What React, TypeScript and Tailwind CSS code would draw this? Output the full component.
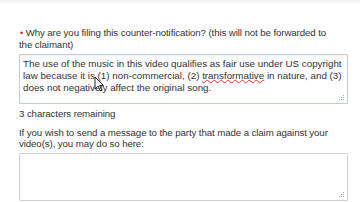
import React from "react";

export default function App() {
  return (
    <div className="w-[360px] h-[202px] overflow-hidden bg-white relative" style={{ fontFamily: '"Liberation Sans", Arial, sans-serif' }}>
      <div className="h-[4px] bg-gradient-to-b from-[#f0f0f0] to-white" />
      <div className="pl-[19px] pr-[12px] pt-[23px] text-[9.7px] tracking-[-0.1px] leading-[11px] text-[#333]">
        <div className="pl-[1px] whitespace-nowrap">
          <span className="text-[#d22] text-[9px]">•</span> Why are you filing this counter-notification? (this will not be forwarded to
          <br />
          <span className="-ml-[1px]">the claimant)</span>
        </div>
        <div className="mt-[4px] border border-[#c3ccd5] rounded-[1px] h-[50px] px-[3px] pt-[3px] leading-[12px] text-[9.8px] tracking-normal text-[#333] relative whitespace-nowrap shadow-[inset_0_1px_1px_rgba(0,0,0,0.05)]">
          The use of the music in this video qualifies as fair use under US copyright
          <br />
          law because it is (1) non-commercial, (2) <span className="underline decoration-wavy decoration-[#e33] decoration-[0.5px] underline-offset-[0px]">transformative</span> in nature, and (3)
          <br />
          does not negatively affect the original song.
          <Grip />
        </div>
        <div className="mt-[4px]">3 characters remaining</div>
        <div className="mt-[8px] leading-[11px] whitespace-nowrap">
          If you wish to send a message to the party that made a claim against your
          <br />
          video(s), you may do so here:
        </div>
        <div className="mt-[4px] border border-[#d0d0d0] rounded-[1px] h-[48px] relative">
          <Grip />
        </div>
      </div>
      <svg className="absolute left-[94px] top-[76px]" width="11" height="16" viewBox="0 0 11 16">
        <path d="M1 1 L1 13 L4 10 L6.5 15 L8 14.3 L5.6 9.5 L9.5 9.5 Z" fill="white" stroke="#222" strokeWidth="1" strokeLinejoin="round" />
      </svg>
    </div>
  );
}

function Grip() {
  return (
    <svg className="absolute right-[2px] bottom-[2px]" width="6" height="6" viewBox="0 0 6 6">
      <rect x="4" y="0" width="1" height="1" fill="#aaa" />
      <rect x="2" y="2" width="1" height="1" fill="#aaa" />
      <rect x="4" y="2" width="1" height="1" fill="#aaa" />
      <rect x="0" y="4" width="1" height="1" fill="#aaa" />
      <rect x="2" y="4" width="1" height="1" fill="#aaa" />
      <rect x="4" y="4" width="1" height="1" fill="#aaa" />
    </svg>
  );
}
